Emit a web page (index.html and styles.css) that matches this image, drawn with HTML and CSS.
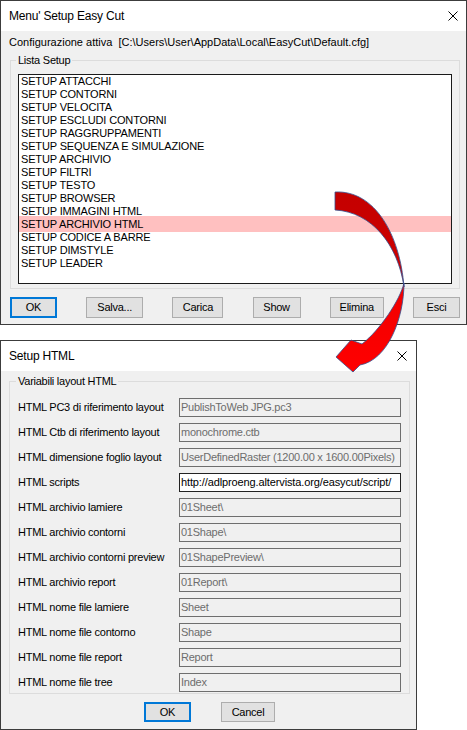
FILE: index.html
```html
<!DOCTYPE html>
<html>
<head>
<meta charset="utf-8">
<title>Menu' Setup Easy Cut</title>
<link rel="stylesheet" href="styles.css">
</head>
<body>
<div class="win win1">
  <div class="titlebar">
    <span class="title">Menu' Setup Easy Cut</span>
    <svg class="close" width="10" height="10" viewBox="0 0 10 10"><path d="M0.5 0.5L9.5 9.5M9.5 0.5L0.5 9.5" stroke="#000" stroke-width="1" fill="none"/></svg>
  </div>
  <div class="body1">
    <div class="config">Configurazione attiva&nbsp; [C:\Users\User\AppData\Local\EasyCut\Default.cfg]</div>
    <fieldset class="group group1">
      <legend>Lista Setup</legend>
      <div class="listbox">
        <div class="item">SETUP ATTACCHI</div>
        <div class="item">SETUP CONTORNI</div>
        <div class="item">SETUP VELOCITA</div>
        <div class="item">SETUP ESCLUDI CONTORNI</div>
        <div class="item">SETUP RAGGRUPPAMENTI</div>
        <div class="item">SETUP SEQUENZA E SIMULAZIONE</div>
        <div class="item">SETUP ARCHIVIO</div>
        <div class="item">SETUP FILTRI</div>
        <div class="item">SETUP TESTO</div>
        <div class="item">SETUP BROWSER</div>
        <div class="item">SETUP IMMAGINI HTML</div>
        <div class="item sel">SETUP ARCHIVIO HTML</div>
        <div class="item">SETUP CODICE A BARRE</div>
        <div class="item">SETUP DIMSTYLE</div>
        <div class="item">SETUP LEADER</div>
      </div>
    </fieldset>
    <div class="btnrow1">
      <button class="btn def w47">OK</button>
      <button class="btn w57">Salva...</button>
      <button class="btn w51">Carica</button>
      <button class="btn w48">Show</button>
      <button class="btn w54">Elimina</button>
      <button class="btn w47">Esci</button>
    </div>
  </div>
</div>

<div class="win win2">
  <div class="titlebar tb2">
    <span class="title">Setup HTML</span>
    <svg class="close" width="10" height="10" viewBox="0 0 10 10"><path d="M0.5 0.5L9.5 9.5M9.5 0.5L0.5 9.5" stroke="#000" stroke-width="1" fill="none"/></svg>
  </div>
  <div class="body2">
    <fieldset class="group group2">
      <legend>Variabili layout HTML</legend>
      <div class="form">
        <span class="lbl">HTML PC3 di riferimento layout</span><div class="tbox">PublishToWeb JPG.pc3</div>
        <span class="lbl">HTML Ctb di riferimento layout</span><div class="tbox">monochrome.ctb</div>
        <span class="lbl">HTML dimensione foglio layout</span><div class="tbox">UserDefinedRaster (1200.00 x 1600.00Pixels)</div>
        <span class="lbl">HTML scripts</span><div class="tbox on">http://adlproeng.altervista.org/easycut/script/</div>
        <span class="lbl">HTML archivio lamiere</span><div class="tbox">01Sheet\</div>
        <span class="lbl">HTML archivio contorni</span><div class="tbox">01Shape\</div>
        <span class="lbl">HTML archivio contorni preview</span><div class="tbox">01ShapePreview\</div>
        <span class="lbl">HTML archivio report</span><div class="tbox">01Report\</div>
        <span class="lbl">HTML nome file lamiere</span><div class="tbox">Sheet</div>
        <span class="lbl">HTML nome file contorno</span><div class="tbox">Shape</div>
        <span class="lbl">HTML nome file report</span><div class="tbox">Report</div>
        <span class="lbl">HTML nome file tree</span><div class="tbox">Index</div>
      </div>
    </fieldset>
    <div class="btnrow2">
      <button class="btn btn2 def w47">OK</button>
      <button class="btn btn2 w54">Cancel</button>
    </div>
  </div>
</div>

<svg class="arrow" viewBox="330 188 80 190" width="80" height="190">
  <defs>
    <linearGradient id="g1" gradientUnits="userSpaceOnUse" x1="0" y1="190" x2="0" y2="290">
      <stop offset="0" stop-color="#c40000"/>
      <stop offset="1" stop-color="#d00000"/>
    </linearGradient>
    <linearGradient id="g2" gradientUnits="userSpaceOnUse" x1="0" y1="283" x2="0" y2="372">
      <stop offset="0" stop-color="#f00000"/>
      <stop offset="1" stop-color="#ff0000"/>
    </linearGradient>
  </defs>
  <path d="M335,192 C375,190 400,235 404,287 C398,245 372,212 335,210 Z" fill="url(#g1)" stroke="#34508f" stroke-width="0.8"/>
  <path d="M404,283 C400,300 380,330 362,344 L351,340 L336,357 L353,372 L360,365 C388,360 404,318 404,283 Z" fill="url(#g2)" stroke="#34508f" stroke-width="0.8"/>
</svg>
</body>
</html>
```

FILE: styles.css
```css
* { box-sizing: border-box; }

body {
  margin: 0;
  width: 467px;
  height: 730px;
  overflow: hidden;
  position: relative;
  background: #ffffff;
  font-family: "Liberation Sans", Arial, sans-serif;
  font-size: 11px;
  letter-spacing: -0.25px;
  color: #000;
}

.win {
  border: 1px solid #3c3c3c;
  background: #f0f0f0;
  display: flex;
  flex-direction: column;
}
.win1 { width: 467px; height: 325px; }
.win2 { width: 417px; height: 390px; margin-top: 15px; }

.titlebar {
  flex: none;
  height: 30px;
  background: #fff;
  display: flex;
  align-items: center;
  justify-content: space-between;
  padding: 0 8px 0 8px;
}
.tb2 { padding-right: 9px; }
.title {
  font-size: 12px;
  letter-spacing: -0.2px;
  line-height: 16px;
}
.close { display: block; }

.body1 {
  flex: 1;
  padding: 5px 0 0 8px;
}
.config {
  height: 13px;
  line-height: 13px;
  white-space: nowrap;
  letter-spacing: 0;
}

.group {
  margin: 0;
  border: 1px solid #dcdcdc;
  min-width: 0;
}
.group legend {
  padding: 0 2px;
  margin-left: -2px;
  line-height: 13px;
  font-size: 11px;
}
.group1 {
  margin: 5px 0 0 1px;
  width: 450px;
  padding: 7px 7px 4px 7px;
}

.listbox {
  width: 434px;
  height: 210px;
  border: 1px solid #1a1a1a;
  background: #fff;
}
.item {
  height: 13px;
  line-height: 13px;
  padding-left: 2px;
  white-space: nowrap;
  letter-spacing: -0.15px;
}
.item.sel {
  background: #ffc0c0;
  height: 16px;
  margin: -2px 0 -1px;
  padding-top: 2px;
  line-height: 13px;
}

.btnrow1 {
  margin: 8px 0 0 1px;
  width: 450px;
  display: flex;
  justify-content: space-between;
}

.btn {
  height: 21px;
  padding: 0;
  border: 1px solid #adadad;
  background: #e1e1e1;
  font-family: "Liberation Sans", Arial, sans-serif;
  font-size: 11px;
  letter-spacing: -0.25px;
  color: #000;
  line-height: 17px;
}
.btn.def { border: 2px solid #0078d7; }
.btn2 { height: 20px; }
.w47 { width: 47px; }
.w48 { width: 48px; }
.w51 { width: 51px; }
.w54 { width: 54px; }
.w57 { width: 57px; }

.body2 {
  flex: 1;
  padding: 4px 0 0 8px;
}
.group2 {
  width: 401px;
  padding: 10px 8px 1px 8px;
}
.form {
  display: grid;
  grid-template-columns: 161px 222px;
  grid-auto-rows: 19px;
  row-gap: 6px;
  align-items: center;
}
.lbl {
  line-height: 13px;
  white-space: nowrap;
}
.tbox {
  height: 19px;
  border: 1px solid #6e6e6e;
  background: #f0f0f0;
  color: #6d6d6d;
  line-height: 17px;
  padding: 0 1px;
  white-space: nowrap;
  overflow: hidden;
}
.tbox.on {
  border-color: #222;
  background: #fff;
  color: #000;
  letter-spacing: -0.12px;
}

.btnrow2 {
  margin-top: 8px;
  padding-left: 135px;
  display: flex;
  gap: 30px;
}

.arrow {
  position: absolute;
  left: 330px;
  top: 188px;
  pointer-events: none;
}
```
